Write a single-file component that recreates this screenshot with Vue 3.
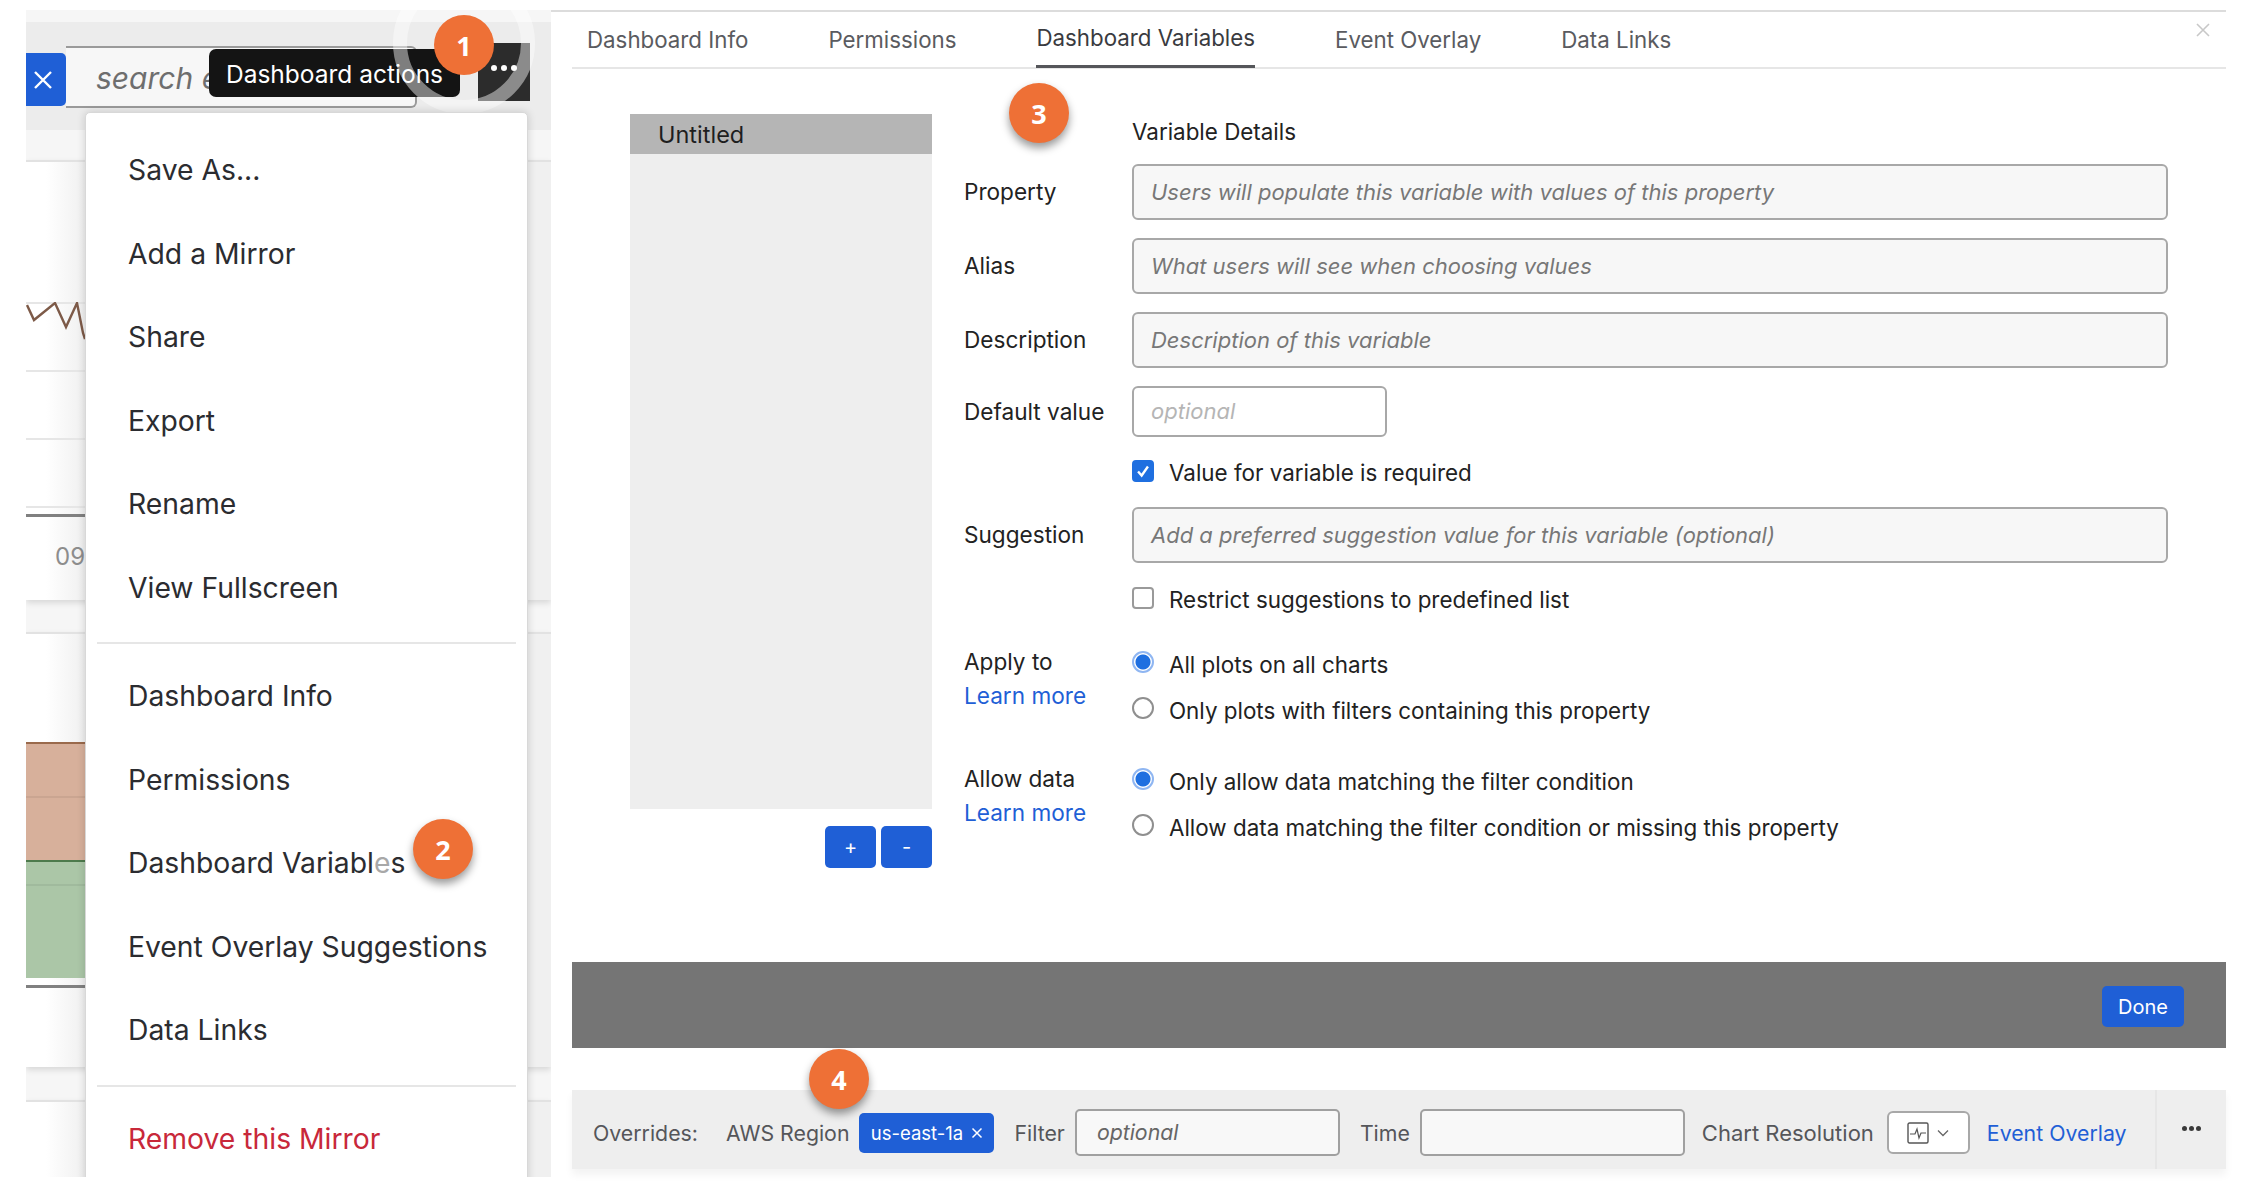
<template>
  <div class="page">
    <!-- left: dashboard with open actions menu -->
    <section class="dash">
      <div class="toolbar">
        <button class="clear-btn">
          <svg viewBox="0 0 20 20" width="20" height="20"><path d="M2 2 18 18M18 2 2 18" stroke="#fff" stroke-width="2.4" fill="none" /></svg>
        </button>
        <div class="search">search events</div>
      </div>
      <div class="tooltip">Dashboard actions</div>
      <button class="dots-btn"><i></i><i></i><i></i></button>
      <div class="ring"></div>
      <span class="badge badge-1">1</span>

      <div class="chart-card first">
        <svg class="squiggle" viewBox="0 0 60 38" width="60" height="38">
          <polyline points="1,3 8,18 29,1 40,25 51,1 57,31 59,37" fill="none" stroke="#7d5a48" stroke-width="2.4" />
        </svg>
        <div class="grid-line"></div>
        <div class="grid-line"></div>
        <div class="grid-line"></div>
        <div class="grid-line last"></div>
        <div class="axis"></div>
        <div class="tick">09</div>
      </div>
      <div class="chart-card second">
        <div class="area orange"><div class="area-line"></div></div>
        <div class="area green"><div class="area-line"></div></div>
        <div class="axis"></div>
      </div>
      <div class="chart-card third"></div>

      <div class="menu">
        <template v-for="(group, i) in menuGroups" :key="i">
          <div v-if="i > 0" class="menu-sep"></div>
          <div
            v-for="item in group"
            :key="item"
            class="menu-item"
            :class="{ danger: item === 'Remove this Mirror' }"
          >
            <template v-if="item === 'Dashboard Variables'">Dashboard Variabl<span class="faded">e</span>s</template>
            <template v-else>{{ item }}</template>
          </div>
        </template>
      </div>
      <span class="badge badge-2">2</span>
    </section>

    <!-- right: dashboard variables editor -->
    <section class="editor">
      <nav class="tabs">
        <span v-for="tab in tabs" :key="tab" class="tab" :class="{ active: tab === 'Dashboard Variables' }">{{ tab }}</span>
        <svg class="close" viewBox="0 0 16 16" width="16" height="16"><path d="M2 2 14 14M14 2 2 14" stroke="#c8c8c8" stroke-width="1.6" fill="none" /></svg>
      </nav>
      <span class="badge badge-3">3</span>

      <div class="body">
        <div class="var-list">
          <div class="var-box">
            <div class="var-selected">Untitled</div>
          </div>
          <div class="var-actions">
            <button class="small-btn">+</button>
            <button class="small-btn">-</button>
          </div>
        </div>

        <div class="form">
          <div></div>
          <div class="form-title">Variable Details</div>

          <label class="label">Property</label>
          <div class="input">Users will populate this variable with values of this property</div>

          <label class="label">Alias</label>
          <div class="input">What users will see when choosing values</div>

          <label class="label">Description</label>
          <div class="input">Description of this variable</div>

          <label class="label">Default value</label>
          <div class="input short faint">optional</div>

          <div></div>
          <div class="check-row">
            <span class="checkbox checked">
              <svg viewBox="0 0 20 20" width="20" height="20"><path d="M4.5 10.5 8.5 15 15.5 5" stroke="#fff" stroke-width="2.6" fill="none" /></svg>
            </span>
            Value for variable is required
          </div>

          <label class="label">Suggestion</label>
          <div class="input">Add a preferred suggestion value for this variable (optional)</div>

          <div></div>
          <div class="check-row restrict">
            <span class="checkbox"></span>
            Restrict suggestions to predefined list
          </div>

          <div v-for="group in radioGroups" :key="group.label" class="radio-section">
            <div class="radio-label">
              <div class="label">{{ group.label }}</div>
              <a class="link">Learn more</a>
            </div>
            <div class="radio-list">
              <div v-for="(opt, i) in group.options" :key="opt" class="check-row">
                <span class="radio" :class="{ on: i === 0 }"></span>
                {{ opt }}
              </div>
            </div>
          </div>
        </div>
      </div>

      <div class="footer-bar">
        <button class="done">Done</button>
      </div>

      <span class="badge badge-4">4</span>
      <div class="overrides">
        <span class="ov-text">Overrides:</span>
        <span class="ov-text region">AWS Region</span>
        <span class="chip">us-east-1a
          <svg viewBox="0 0 12 12" width="12" height="12"><path d="M1.5 1.5 10.5 10.5M10.5 1.5 1.5 10.5" stroke="#fff" stroke-width="1.5" fill="none" /></svg>
        </span>
        <span class="ov-text filter">Filter</span>
        <div class="ov-input">optional</div>
        <span class="ov-text time">Time</span>
        <div class="ov-input"></div>
        <span class="ov-text res">Chart Resolution</span>
        <div class="res-select">
          <svg viewBox="0 0 22 22" width="22" height="22">
            <rect x="1" y="1" width="20" height="20" rx="1.5" fill="none" stroke="#555" stroke-width="1.4" />
            <polyline points="3,12 8,12 10,7 12,16 14,11 19,11" fill="none" stroke="#555" stroke-width="1.2" />
          </svg>
          <svg viewBox="0 0 12 8" width="12" height="8"><path d="M1 1.5 6 6.5 11 1.5" fill="none" stroke="#666" stroke-width="1.3" /></svg>
        </div>
        <a class="link overlay">Event Overlay</a>
        <div class="ov-more"><i></i><i></i><i></i></div>
      </div>
    </section>
  </div>
</template>

<script setup>
const menuGroups = [
  ['Save As...', 'Add a Mirror', 'Share', 'Export', 'Rename', 'View Fullscreen'],
  ['Dashboard Info', 'Permissions', 'Dashboard Variables', 'Event Overlay Suggestions', 'Data Links'],
  ['Remove this Mirror']
]

const tabs = ['Dashboard Info', 'Permissions', 'Dashboard Variables', 'Event Overlay', 'Data Links']

const radioGroups = [
  {
    label: 'Apply to',
    options: ['All plots on all charts', 'Only plots with filters containing this property']
  },
  {
    label: 'Allow data',
    options: ['Only allow data matching the filter condition', 'Allow data matching the filter condition or missing this property']
  }
]
</script>

<style>
html, body { background: #fff; overflow: hidden; }
</style>

<style scoped>
.page {
  width: 2256px;
  height: 1192px;
  box-sizing: border-box;
  padding: 10px 30px 15px 26px;
  display: flex;
  gap: 21px;
  font-family: Inter, "Liberation Sans", sans-serif;
  color: #2b2c30;
  position: relative;
  overflow: hidden;
}
.page::before {
  content: "";
  position: absolute;
  left: 26px;
  right: 30px;
  top: 10px;
  height: 2px;
  background: #dcdcdc;
}

/* left side */
.dash {
  width: 525px;
  flex: none;
  background: #f6f6f6;
  padding-top: 12px;
  box-sizing: border-box;
  position: relative;
  overflow: hidden;
}
.toolbar {
  height: 108px;
  background: #ececec;
  display: flex;
  align-items: flex-start;
  padding-top: 24px;
  box-sizing: border-box;
}
.clear-btn {
  width: 40px;
  height: 53px;
  margin-top: 7px;
  border: none;
  background: #1f5fd6;
  border-radius: 0 5px 5px 0;
  display: flex;
  align-items: center;
  justify-content: center;
  padding: 0 6px 0 0;
}
.search {
  width: 351px;
  height: 62px;
  box-sizing: border-box;
  border: 2px solid #9a9a9a;
  border-left: none;
  border-radius: 0 6px 6px 0;
  background: #f7f7f7;
  padding-left: 30px;
  font-size: 30px;
  line-height: 60px;
  font-style: italic;
  color: #6e6e6e;
  white-space: nowrap;
  overflow: hidden;
}
.tooltip {
  position: absolute;
  left: 183px;
  top: 39px;
  width: 251px;
  height: 48px;
  box-sizing: border-box;
  padding-left: 17px;
  background: #141414;
  color: #fff;
  border-radius: 7px;
  font-size: 24.5px;
  line-height: 50px;
  white-space: nowrap;
}
.dots-btn {
  position: absolute;
  left: 452px;
  top: 33px;
  width: 52px;
  height: 58px;
  border: none;
  background: #2c2c2c;
  display: flex;
  align-items: center;
  justify-content: center;
  gap: 4px;
  padding: 0 0 8px;
}
.dots-btn i {
  width: 6px;
  height: 6px;
  border-radius: 50%;
  background: #fff;
}
.ring {
  position: absolute;
  left: 367px;
  top: -38px;
  width: 142px;
  height: 142px;
  box-sizing: border-box;
  border-radius: 50%;
  border: 14px solid rgba(255, 255, 255, 0.45);
}
.badge {
  position: absolute;
  width: 60px;
  height: 60px;
  border-radius: 50%;
  background: #ee7036;
  color: #fff;
  font-family: "Open Sans", sans-serif;
  font-weight: 700;
  font-size: 27px;
  display: flex;
  align-items: center;
  justify-content: center;
  box-shadow: 0 5px 9px rgba(0, 0, 0, 0.4);
  z-index: 3;
}
.badge-1 { left: 408px; top: 5px; box-shadow: none; }
.badge-2 { left: 387px; top: 809px; }
.badge-3 { left: 437px; top: 73px; }
.badge-4 { left: 237px; top: 1039px; }

.chart-card {
  background: linear-gradient(90deg, #fff, #fff 20px, #f0f0f0 59px);
  border-top: 2px solid #e2e2e2;
  box-shadow: 0 3px 6px rgba(0, 0, 0, 0.12);
  box-sizing: border-box;
}
.chart-card.first { height: 440px; margin-top: 30px; padding-top: 140px; position: relative; }
.chart-card.second { height: 435px; margin-top: 32px; padding-top: 108px; }
.chart-card.third { height: 77px; margin-top: 33px; }
.grid-line {
  height: 2px;
  background: #e6e6e6;
  margin-bottom: 66px;
  width: 60px;
}
.grid-line.last { margin-bottom: 6px; }
.squiggle { position: absolute; left: 0; top: 140px; }
.axis { height: 3px; width: 60px; background: #808080; }
.tick { font-size: 24px; color: #8d8d8d; margin: 25px 0 0 29px; }
.area { width: 60px; box-sizing: border-box; }
.area.orange { height: 118px; background: #d7b09b; border-top: 2px solid #9a6a4c; padding-top: 52px; }
.area.green { height: 118px; background: #abc6a7; border-top: 2px solid #4d7a4c; padding-top: 22px; }
.area-line { height: 2px; background: rgba(0, 0, 0, 0.06); }
.second .axis { margin-top: 7px; }

.menu {
  position: absolute;
  left: 59px;
  top: 102px;
  width: 443px;
  height: 1100px;
  box-sizing: border-box;
  background: #fff;
  border: 1px solid #d8d8d8;
  border-radius: 5px;
  box-shadow: 0 0 8px rgba(0, 0, 0, 0.16);
  padding: 16px 11px 0;
  z-index: 2;
}
.menu-item {
  height: 83.5px;
  line-height: 83.5px;
  padding-left: 31px;
  font-size: 28.3px;
  white-space: nowrap;
  color: #2b2c30;
}
.menu-item.danger { color: #c8283a; }
.faded { color: #a8a8a8; }
.menu-sep { height: 2px; background: #e6e6e6; margin: 12px 0 11px; }

/* right side */
.editor {
  flex: 1;
  min-width: 0;
  display: flex;
  flex-direction: column;
  position: relative;
}
.tabs {
  height: 59px;
  flex: none;
  border-bottom: 2px solid #e6e6e6;
  box-sizing: border-box;
  display: flex;
  align-items: flex-start;
  padding-left: 15px;
  position: relative;
}
.tab {
  font-size: 22.3px;
  color: #5a5b60;
  line-height: 60px;
  margin-right: 80px;
  white-space: nowrap;
}
.tab.active {
  color: #3a3b40;
  height: 58px;
  line-height: 55px;
  border-bottom: 3px solid #55565a;
  box-sizing: border-box;
}
.close { position: absolute; right: 15px; top: 12px; }

.body {
  height: 893px;
  flex: none;
  display: flex;
  padding: 45px 58px 0;
  box-sizing: border-box;
}
.var-list { width: 302px; flex: none; }
.var-box { height: 695px; background: #eeeeee; }
.var-selected {
  height: 40px;
  line-height: 41px;
  background: #b5b5b5;
  padding-left: 28px;
  font-size: 23.5px;
  color: #1e1e1e;
}
.var-actions {
  display: flex;
  justify-content: flex-end;
  gap: 5px;
  margin-top: 17px;
}
.small-btn {
  width: 51px;
  height: 42px;
  border: none;
  border-radius: 5px;
  background: #1f5fd6;
  color: #fff;
  font-family: inherit;
  font-size: 20px;
}

.form {
  flex: 1;
  margin-left: 32px;
  display: grid;
  grid-template-columns: 168px 1fr;
  grid-auto-rows: min-content;
  row-gap: 18px;
  align-items: center;
  font-size: 22.4px;
}
.form-title {
  height: 33px;
  line-height: 35px;
  margin-bottom: -1px;
  color: #222;
}
.label { font-size: 22.6px; color: #222; line-height: 34px; }
.input {
  height: 56px;
  box-sizing: border-box;
  border: 2px solid #a8a8a8;
  border-radius: 6px;
  background: #f7f7f7;
  padding-left: 17px;
  line-height: 52px;
  font-size: 22px;
  font-style: italic;
  color: #777;
  white-space: nowrap;
}
.input.short { width: 255px; height: 51px; line-height: 47px; background: #fff; }
.input.faint { color: #b5b5b5; }
.check-row {
  height: 34px;
  display: flex;
  align-items: center;
  gap: 15px;
  color: #222;
  white-space: nowrap;
}
.check-row.restrict { margin-top: 1px; }
.checkbox {
  width: 22px;
  height: 22px;
  flex: none;
  box-sizing: border-box;
  border: 2px solid #9a9a9a;
  border-radius: 4px;
  background: #fff;
  margin-top: -3px;
  display: flex;
  align-items: center;
  justify-content: center;
}
.checkbox.checked { background: #1f6fe0; border-color: #1f6fe0; }
.radio-section {
  grid-column: 1 / -1;
  display: grid;
  grid-template-columns: 168px 1fr;
  margin-top: 11px;
}
.radio-section + .radio-section { margin-top: 17px; }
.radio-label { line-height: 34px; }
.radio-list {
  display: flex;
  flex-direction: column;
  gap: 12px;
  padding-top: 2px;
}
.radio {
  width: 22px;
  height: 22px;
  flex: none;
  box-sizing: border-box;
  border: 2px solid #8f8f8f;
  border-radius: 50%;
  background: #fff;
  margin-top: -4px;
}
.radio.on {
  border-color: #8fb6f2;
  background: radial-gradient(circle, #1f6fe0 0 7px, #fff 8px);
}
.link { color: #1f5fd6; font-size: 22.6px; line-height: 34px; display: block; }

.footer-bar {
  height: 86px;
  flex: none;
  background: #757575;
  display: flex;
  align-items: center;
  justify-content: flex-end;
  padding: 3px 42px 0 0;
  box-sizing: border-box;
}
.done {
  width: 82px;
  height: 41px;
  border: none;
  border-radius: 5px;
  background: #1f5fd6;
  color: #fff;
  font-family: inherit;
  font-size: 20px;
}

.overrides {
  height: 79px;
  flex: none;
  margin-top: 42px;
  padding: 6px 0 0 21px;
  box-sizing: border-box;
  background: #eeeeee;
  display: flex;
  align-items: center;
  font-size: 21.3px;
  color: #55565a;
  white-space: nowrap;
  box-shadow: 0 6px 8px rgba(0, 0, 0, 0.05);
}
.ov-text { line-height: 30px; }
.region { margin-left: 28px; }
.chip {
  margin-left: 10px;
  width: 135px;
  height: 40px;
  box-sizing: border-box;
  background: #1f5fd6;
  color: #fff;
  font-size: 18.5px;
  border-radius: 5px;
  display: flex;
  align-items: center;
  justify-content: center;
  gap: 8px;
}
.filter { margin-left: 20px; }
.ov-input {
  width: 265px;
  height: 47px;
  margin-left: 10px;
  box-sizing: border-box;
  border: 2px solid #a0a0a0;
  border-radius: 5px;
  background: #f8f8f8;
  padding-left: 20px;
  line-height: 43px;
  font-style: italic;
  color: #666;
}
.time { margin-left: 20px; }
.res { margin-left: 17px; font-size: 22px; }
.res-select {
  width: 83px;
  height: 43px;
  margin-left: 13px;
  box-sizing: border-box;
  border: 2px solid #a8a8a8;
  border-radius: 6px;
  background: #fff;
  display: flex;
  align-items: center;
  justify-content: center;
  gap: 8px;
}
.overlay { margin-left: 17px; font-size: 21.3px; }
.ov-more {
  margin-left: auto;
  align-self: stretch;
  margin-top: -6px;
  width: 71px;
  box-sizing: border-box;
  border-left: 2px solid #e6e6e6;
  display: flex;
  justify-content: center;
  gap: 2px;
  padding-top: 36px;
}
.ov-more i {
  width: 5px;
  height: 5px;
  border-radius: 50%;
  background: #3a3a3a;
}
</style>
